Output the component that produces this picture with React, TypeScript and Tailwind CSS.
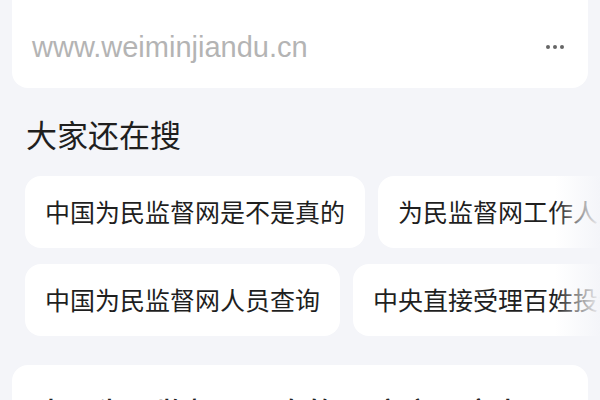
import React from "react";

const rows: string[][] = [
  ["中国为民监督网是不是真的", "为民监督网工作人员名单"],
  ["中国为民监督网人员查询", "中央直接受理百姓投诉电话"],
];

export default function App() {
  return (
    <div
      className="relative h-[400px] w-[600px] overflow-hidden bg-[#f4f5f9]"
      style={{ fontFamily: '"Noto Sans CJK SC", "Noto Sans", sans-serif' }}
    >
      {/* Result card (top cut off) */}
      <div className="mx-3 -mt-6 flex h-[112px] items-end rounded-[16px] bg-white pb-[24px] pl-5 pr-6">
        <span className="flex-1 font-['Liberation_Sans',sans-serif] text-[29px] leading-[34px] text-[#b4b4b4]">
          www.weiminjiandu.cn
        </span>
        <div className="mb-[15px] flex items-center gap-[3px]">
          <span className="h-[4px] w-[4px] rounded-full bg-[#666]" />
          <span className="h-[4px] w-[4px] rounded-full bg-[#666]" />
          <span className="h-[4px] w-[4px] rounded-full bg-[#666]" />
        </div>
      </div>

      {/* Related searches */}
      <h2 className="mt-[26px] pl-[26px] text-[31px] leading-[40px] font-normal text-[#1f1f1f]">
        大家还在搜
      </h2>

      <div className="mt-[22px] flex flex-col gap-[16px] pl-[25px]">
        {rows.map((row, i) => (
          <div key={i} className="flex gap-[13px]">
            {row.map((t) => (
              <div
                key={t}
                className="flex h-[72px] shrink-0 items-center whitespace-nowrap rounded-[16px] bg-white px-5 text-[25px] text-[#1f1f1f]"
              >
                {t}
              </div>
            ))}
          </div>
        ))}
      </div>

      {/* right edge fade */}
      <div className="absolute right-0 top-[170px] h-[175px] w-[45px] bg-gradient-to-l from-[#f4f5f9] to-transparent" />

      {/* next card, mostly below the fold */}
      <div className="mx-3 mt-[29px] h-[80px] rounded-[16px] bg-white px-6 pt-[26px] text-[30px] leading-[40px] font-medium text-[#222]">
        中国为民监督网是真的吗 官方回应来了
      </div>
    </div>
  );
}
